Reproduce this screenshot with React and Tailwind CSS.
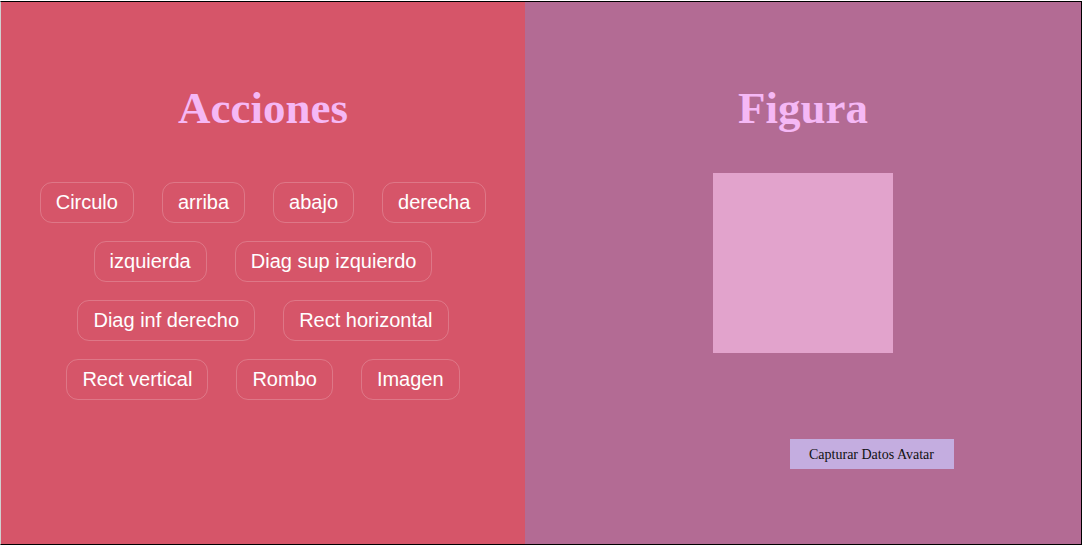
import React from "react";

const rows = [
  "Circulo", "arriba", "abajo", "derecha", "izquierda", "Diag sup izquierdo",
  "Diag inf derecho", "Rect horizontal", "Rect vertical", "Rombo", "Imagen",
];

export default function App() {
  return (
    <div className="w-[1084px] h-[549px] bg-white pt-px">
      <div className="flex w-[1082px] h-[544px] border-t border-r border-b border-black border-l border-l-[#d0d0d0]">
        <div className="w-[524px] h-full bg-[#d65569] flex flex-col items-center pt-[81px] px-[20px]">
          <h1 className="text-[45px] leading-[50px] font-bold text-[#f5b8f5] m-0" style={{ fontFamily: '"Liberation Serif", "Times New Roman", serif' }}>
            Acciones
          </h1>
          <div className="mt-[49px] flex flex-wrap justify-center gap-x-[28px] gap-y-[18px] w-full">
            {rows.map((t) => (
              <button
                key={t}
                className="px-[15px] py-[8px] text-[20px] leading-[23px] text-white border border-white/20 rounded-[12px] bg-transparent"
                style={{ fontFamily: '"Liberation Sans", Arial, sans-serif' }}
              >
                {t}
              </button>
            ))}
          </div>
        </div>
        <div className="flex-1 h-full bg-[#b36b94] flex flex-col items-center pt-[81px]">
          <h1 className="text-[45px] leading-[50px] font-bold text-[#f5b8f5] m-0" style={{ fontFamily: '"Liberation Serif", "Times New Roman", serif' }}>
            Figura
          </h1>
          <div className="mt-[40px] w-[180px] h-[180px] bg-[#e2a3cc]" />
          <button
            className="mt-[86px] ml-[137px] w-[164px] h-[30px] bg-[#c4ade0] text-[14px] text-[#111]"
            style={{ fontFamily: '"Liberation Serif", "Times New Roman", serif' }}
          >
            Capturar Datos Avatar
          </button>
        </div>
      </div>
    </div>
  );
}
